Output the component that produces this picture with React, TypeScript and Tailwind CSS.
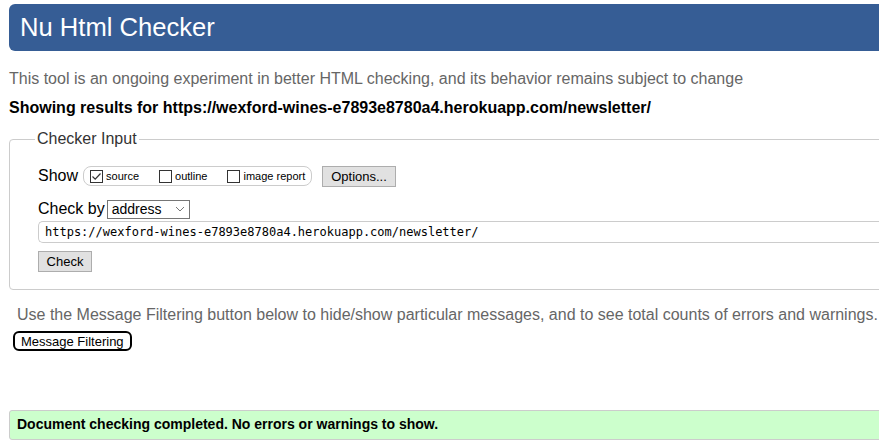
import React from "react";

const Box = ({ checked }: { checked?: boolean }) => (
  <span className="inline-flex h-[13px] w-[13px] shrink-0 items-center justify-center border border-[#333] bg-white">
    {checked && (
      <svg width="11" height="11" viewBox="0 0 11 11">
        <path d="M1.5 5.5 L4.2 8.2 L9.5 2.5" fill="none" stroke="#333" strokeWidth="1.2" />
      </svg>
    )}
  </span>
);

const App: React.FC = () => {
  const url = "https://wexford-wines-e7893e8780a4.herokuapp.com/newsletter/";

  return (
    <div className="h-[445px] w-screen overflow-hidden bg-white font-['Liberation_Sans',Arial,sans-serif] text-black">
      <div className="w-[960px] pl-[9px] pt-[4px]">
        {/* Header */}
        <div className="flex h-[47px] items-center rounded-l-[6px] bg-[#365d95] pl-[11px] text-[25.6px] leading-none text-white">
          Nu Html Checker
        </div>

        <p className="mt-[19px] text-[16px] leading-[18px] text-[#666]">
          This tool is an ongoing experiment in better HTML checking, and its behavior remains subject to change
        </p>
        <p className="mt-[11px] text-[16px] font-bold leading-[18px]">Showing results for {url}</p>

        {/* Checker input */}
        <fieldset className="mt-[13px] rounded-[4px] border border-[#ccc] pb-[16px] pl-[28px]">
          <legend className="-ml-[3px] px-[2px] text-[16px] leading-[18px] text-[#333]">Checker Input</legend>

          <div className="mt-[17px] flex h-[22px] items-center">
            <span className="text-[16px] leading-[18px]">Show</span>
            <div className="ml-[5px] flex h-[20px] w-[229px] items-center rounded-[8px] border border-[#ccc] pl-[6px] text-[11px]">
              <Box checked />
              <span className="ml-[3px]">source</span>
              <span className="ml-[20px] flex">
                <Box />
              </span>
              <span className="ml-[3px]">outline</span>
              <span className="ml-[20px] flex">
                <Box />
              </span>
              <span className="ml-[3px]">image report</span>
            </div>
            <button className="ml-[10px] h-[21px] w-[74px] border border-[#adadad] bg-[#e1e1e1] text-[13px]">
              Options...
            </button>
          </div>

          <div className="mt-[12px] flex h-[20px] items-center">
            <span className="text-[16px] leading-[18px]">Check by</span>
            <div className="ml-[2px] flex h-[19px] w-[83px] items-center justify-between border border-[#767676] pl-[4px] pr-[4px] text-[14px]">
              <span>address</span>
              <svg width="10" height="6" viewBox="0 0 10 6">
                <path d="M1 1 L5 5 L9 1" fill="none" stroke="#777" strokeWidth="1" />
              </svg>
            </div>
          </div>

          <div className="mt-[2px] flex h-[22px] items-center rounded-l-[5px] border border-r-0 border-[#ccc] pl-[6px] font-['DejaVu_Sans_Mono',monospace] text-[12px]">
            {url}
          </div>

          <button className="mt-[8px] h-[21px] w-[54px] border border-[#adadad] bg-[#e1e1e1] text-[13px]">
            Check
          </button>
        </fieldset>

        <p className="ml-[8px] mt-[16px] text-[16px] leading-[18px] text-[#666]">
          Use the Message Filtering button below to hide/show particular messages, and to see total counts of errors and warnings.
        </p>
        <button className="ml-[4px] mt-[7px] h-[20px] rounded-[6px] border-2 border-black bg-white px-[6px] text-[13px] leading-none">
          Message Filtering
        </button>

        <div className="mt-[57px] flex h-[30px] items-center rounded-l-[3px] border border-[#ccc] bg-[#ccffcc] pl-[7px] text-[14px] font-bold">
          Document checking completed. No errors or warnings to show.
        </div>
      </div>
    </div>
  );
};

export default App;
